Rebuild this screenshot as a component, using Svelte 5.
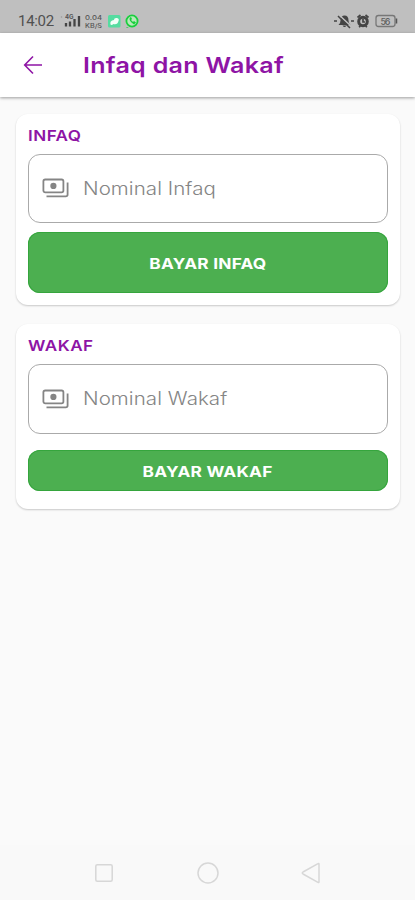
<script>
  const sections = [
    { name: 'Infaq', tall: true },
    { name: 'Wakaf', tall: false }
  ];
</script>

<div class="screen">
  <div class="status">
    <span class="time">14:02</span>
    <svg class="signal" width="80" height="18" viewBox="0 0 80 18">
      <circle cx="1.500" cy="5" r="0.800" fill="#999" />
      <text x="5" y="7" font-size="6" font-weight="700" fill="#555">4G</text>
      <path d="M6 14.500v-3.500M10 14.500v-5M14.500 14.500V7M19 14.500V4" stroke="#454545" stroke-width="2.300" />
      <text x="25" y="8" font-size="6.500" font-weight="500" fill="#555" textLength="17" lengthAdjust="spacingAndGlyphs">0.04</text>
      <text x="25" y="15.800" font-size="6" font-weight="500" fill="#555" textLength="17" lengthAdjust="spacingAndGlyphs">KB/S</text>
      <rect x="48" y="3" width="12.500" height="12.500" rx="1.500" fill="#55dca0" />
      <path d="M50.500 12.500q-1-4 3.500-4.500 0-2.500 3-2 2.500.5 1.500 3-1 4-5 3-2 1.500-3 .5z" fill="#f2fff8" />
      <circle cx="72" cy="9" r="5.600" fill="#b9e8bb" stroke="#19cf3d" stroke-width="1.800" />
      <path d="M67 15l-1 1 3-.6zM70 5.500q-2 3 4 7l2-2-2-1.500-1 1-2-2 1-1-1-2z" fill="#19cf3d" />
    </svg>
    <svg class="system" width="66" height="18" viewBox="0 0 66 18">
      <path d="M4.500 13q2-1.500 2-4.500Q7 3.500 10.500 3.500q4 0 4 5 0 3 2 4.500z M8.500 13.500h4q-2 3-4 0" fill="#444" />
      <path d="M4.500 2.500l13 12" stroke="#bfbfbf" stroke-width="1.600" />
      <path d="M4 4l12 12M0 9h3M17 9h3" stroke="#444" stroke-width="1.500" />
      <circle cx="29" cy="9.500" r="4.300" fill="none" stroke="#444" stroke-width="3" />
      <path d="M23.500 5.500l3-2.500M34.500 5.500l-3-2.500M25 15l1.500-1M33 15l-1.500-1M29 7v3h2" fill="none" stroke="#444" stroke-width="1.700" />
      <rect x="42" y="3.500" width="19" height="11" rx="2.500" fill="none" stroke="#777" stroke-width="1.300" />
      <path d="M62.500 6.500v5" stroke="#555" stroke-width="1.500" />
      <text x="46.500" y="12.500" font-size="9" font-weight="500" fill="#606060" textLength="10">56</text>
    </svg>
  </div>

  <header>
    <svg class="back" width="20" height="20" viewBox="0 0 20 20" fill="none" stroke="#8e14a5" stroke-width="1.600">
      <path d="M10 1.500L1.700 10l8.300 8.500M1.700 10H19" />
    </svg>
    <h1>Infaq dan Wakaf</h1>
  </header>

  <main>
    {#each sections as s}
      <section class:tall={s.tall}>
        <h2>{s.name.toUpperCase()}</h2>
        <div class="field">
          <svg width="28" height="20" viewBox="0 0 28 20" fill="none" stroke="#858585" stroke-width="1.800">
            <rect x="1.400" y="1.500" width="20" height="12.800" rx="1.800" />
            <circle cx="11.400" cy="7.900" r="3.100" fill="#858585" stroke="none" />
            <path d="M25.600 4.500v12q0 1.800-1.800 1.800H4.500" />
          </svg>
          <span class="hint">Nominal {s.name}</span>
        </div>
        <button><span>BAYAR {s.name.toUpperCase()}</span></button>
      </section>
    {/each}
  </main>

  <nav>
    <svg width="20" height="20" viewBox="0 0 20 20"><rect x="1.800" y="1.800" width="16.400" height="16.400" rx="1.500" /></svg>
    <svg width="22" height="22" viewBox="0 0 22 22"><circle cx="11" cy="11" r="10" /></svg>
    <svg width="20" height="22" viewBox="0 0 20 22"><path d="M18 2v18q0 1-1 .4L2 12q-1.500-1 0-2L17 1.600q1-.6 1 .4z" /></svg>
  </nav>
</div>

<style>
  .screen {
    height: 900px;
    display: flex;
    flex-direction: column;
    background: #fafafa;
    font-family: Inter, "Liberation Sans", sans-serif;
    overflow: hidden;
  }
  .status {
    height: 33px;
    box-sizing: border-box;
    padding: 9px 15px 0 18px;
    display: flex;
    align-items: center;
    background: #bfbfbf;
  }
  .time {
    width: 42px;
    font: 15px Roboto, sans-serif;
    letter-spacing: -0.3px;
    color: #505050;
  }
  .system { margin-left: auto; }
  header {
    height: 64px;
    display: flex;
    align-items: center;
    padding-left: 23px;
    background: #fff;
    box-shadow: 0 1px 3px rgba(0, 0, 0, 0.38);
  }
  h1, h2, .hint {
    transform: scaleX(1.14);
    transform-origin: left;
  }
  h1 {
    margin: 0 0 0 40px;
    font-size: 22px;
    font-weight: 600;
    letter-spacing: 0.25px;
    color: #8e14a5;
    white-space: nowrap;
  }
  main {
    flex: 1;
    display: flex;
    flex-direction: column;
    gap: 19px;
    padding: 17px 15px 0 16px;
  }
  section {
    box-sizing: border-box;
    height: 185px;
    padding: 12px;
    display: flex;
    flex-direction: column;
    border-radius: 12px;
    background: #fff;
    box-shadow: 0 1px 2px rgba(0, 0, 0, 0.2);
  }
  section.tall { height: 191px; }
  h2 {
    align-self: flex-start;
    margin: 0 0 7.5px;
    line-height: 20px;
    font-size: 15px;
    font-weight: 600;
    letter-spacing: 0.4px;
    color: #8e14a5;
  }
  .field {
    box-sizing: border-box;
    height: 70px;
    padding-left: 13px;
    display: flex;
    align-items: center;
    border: 1px solid #aaa;
    border-radius: 12px;
  }
  .hint {
    margin-left: 13px;
    font-size: 18px;
    font-weight: 300;
    letter-spacing: 0.05px;
    color: #858585;
  }
  button {
    height: 41px;
    margin: 16px 0 0;
    padding: 2px 0 0;
    border: 0;
    border-radius: 12px;
    background: #4caf50;
    box-shadow: inset 0 0 0 1px #35a53d;
    color: #fff;
    font-family: inherit;
    font-size: 15px;
    font-weight: 700;
    letter-spacing: 0.2px;
  }
  button span {
    display: inline-block;
    transform: scaleX(1.15);
  }
  .tall button {
    height: 61px;
    margin-top: 9px;
  }
  nav {
    height: 55px;
    padding: 0 94px;
    display: flex;
    align-items: center;
    justify-content: space-between;
    background: #f9f9f9;
  }
  nav svg {
    fill: none;
    stroke: #d7d7d7;
    stroke-width: 1.5;
  }
</style>
